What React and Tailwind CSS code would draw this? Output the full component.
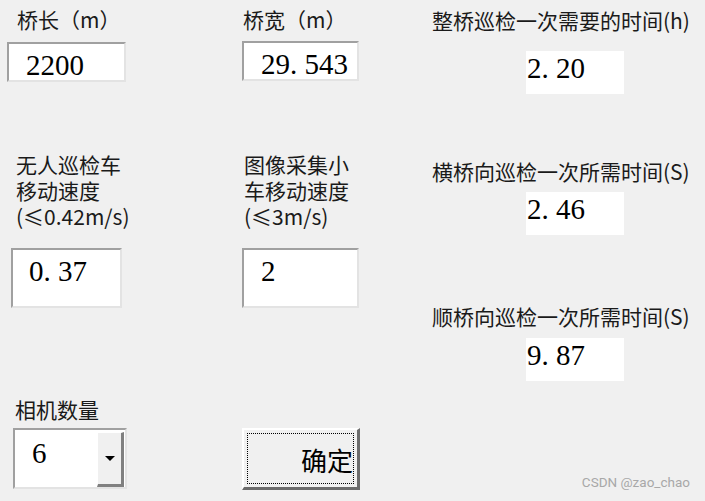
import React from 'react';

// 等宽数字（模拟宋体半角）
const Num = ({ value }) => (
  <span className="inline-flex font-['Liberation_Serif','DejaVu_Serif',serif]">
    {value.split('').map((ch, i) => (
      <span key={i} className="inline-block w-[14.5px] text-left">
        {ch}
      </span>
    ))}
  </span>
);

const Label = ({ lines, className = '' }) => (
  <div className={`text-[21px] leading-[26px] text-[#1a1a1a] ${className}`}>
    {lines.map((l) => (
      <div key={l} className="whitespace-nowrap h-[26px]">{l}</div>
    ))}
  </div>
);

const Sunken = ({ className = '', children }) => (
  <div
    className={`border-t-2 border-l-2 border-t-[#a0a0a0] border-l-[#a0a0a0] border-b-2 border-r-2 border-b-[#e3e3e3] border-r-[#e3e3e3] bg-white ${className}`}
  >
    {children}
  </div>
);

const Result = ({ value, className = '' }) => (
  <div className={`ml-[94px] w-[98px] h-[43px] bg-white pl-[1px] text-[29px] leading-[28px] text-black ${className}`}>
    <Num value={value} />
  </div>
);

const App = () => {
  return (
    <div className="w-[705px] h-[501px] bg-[#f0f0f0] flex relative overflow-hidden font-['Noto_Sans_CJK_SC','Noto_Sans',sans-serif]">
      {/* 左列 */}
      <div className="w-[235px] flex flex-col">
        <Label lines={['桥长（m）']} className="mt-[6px] ml-[17px]" />
        <Sunken className="mt-[10px] ml-[7px] w-[119px] h-[40px]">
          <div className="pl-[17px] pt-[2px] text-[29px] leading-[32px] text-black">
            <Num value="2200" />
          </div>
        </Sunken>
        <Label lines={['无人巡检车', '移动速度', '(≤0.42m/s)']} className="mt-[69px] ml-[16px]" />
        <Sunken className="mt-[19px] ml-[11px] w-[111px] h-[60px]">
          <div className="pl-[16px] pt-[2px] text-[29px] leading-[32px] text-black">
            <Num value="0.37" />
          </div>
        </Sunken>
        <Label lines={['相机数量']} className="mt-[88px] ml-[15px]" />
        <div className="mt-[6px] ml-[13px] w-[114px] h-[61px] flex border-t-2 border-l-2 border-[#a0a0a0] border-b-2 border-r-2 border-b-[#e3e3e3] border-r-[#e3e3e3] bg-white">
          <div className="flex-1 pl-[17px] pt-[4px] text-[29px] leading-[32px] text-black">
            <Num value="6" />
          </div>
          <div className="w-[27px] mt-[2px] mr-[1px] bg-[#f0f0f0] border-t border-l border-white border-b-[3px] border-r-[3px] border-b-[#808080] border-r-[#808080] flex items-center justify-center">
            <div className="w-0 h-0 border-l-[5px] border-r-[5px] border-t-[5px] border-l-transparent border-r-transparent border-t-black" />
          </div>
        </div>
      </div>

      {/* 中列 */}
      <div className="w-[185px] flex flex-col pl-[7px]">
        <Label lines={['桥宽（m）']} className="mt-[6px] ml-[1px]" />
        <Sunken className="mt-[9px] w-[117px] h-[40px]">
          <div className="pl-[17px] pt-[2px] text-[29px] leading-[32px] text-black">
            <Num value="29.543" />
          </div>
        </Sunken>
        <Label lines={['图像采集小', '车移动速度', '(≤3m/s)']} className="mt-[70px] ml-[2px]" />
        <Sunken className="mt-[19px] w-[117px] h-[60px]">
          <div className="pl-[17px] pt-[2px] text-[29px] leading-[32px] text-black">
            <Num value="2" />
          </div>
        </Sunken>
        <div className="mt-[120px] w-[118px] h-[62px] bg-[#f0f0f0] border-t-2 border-l-2 border-white border-b-[3px] border-r-[3px] border-b-[#6b6b6b] border-r-[#6b6b6b] p-[3px]">
          <div className="h-full border border-dotted border-black flex items-center justify-end overflow-hidden">
            <span className="text-[26px] leading-none text-black pt-[2px]">确定</span>
          </div>
        </div>
      </div>

      {/* 右列 */}
      <div className="flex-1 flex flex-col pl-[12px]">
        <Label lines={['整桥巡检一次需要的时间(h)']} className="mt-[7px] text-[21.5px]" />
        <Result value="2.20" className="mt-[18px]" />
        <Label lines={['横桥向巡检一次所需时间(S)']} className="mt-[64px]" />
        <Result value="2.46" className="mt-[8px] h-[42px]" />
        <Label lines={['顺桥向巡检一次所需时间(S)']} className="mt-[68px]" />
        <Result value="9.87" className="mt-[9px] h-[42px]" />
        <div className="mt-auto mb-[9px] self-end mr-[15px] text-[13.5px] text-[#a8a8a8] font-['Roboto','Noto_Sans',sans-serif]">
          CSDN @zao_chao
        </div>
      </div>
    </div>
  );
};

export default App;
